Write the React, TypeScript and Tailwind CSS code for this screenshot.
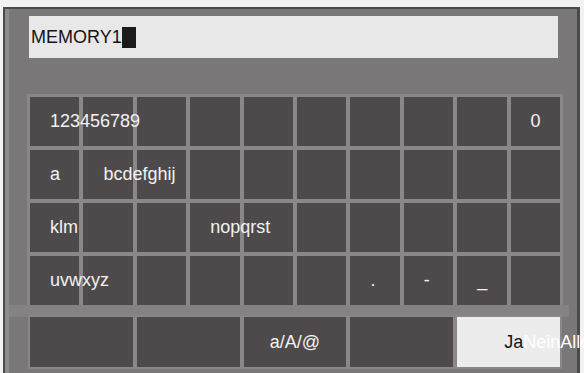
import React from "react";

const rows: { col: number; label: string }[][] = [
  [{ col: 0, label: "123456789" }, { col: 9, label: "0" }],
  [{ col: 0, label: "a" }, { col: 1, label: "bcdefghij" }],
  [{ col: 0, label: "klm" }, { col: 3, label: "nopqrst" }],
  [{ col: 0, label: "uvwxyz" }, { col: 6, label: "." }, { col: 7, label: "-" }, { col: 8, label: "_" }],
];

export default function App() {
  return (
    <div
      className="w-[584px] h-[373px] overflow-hidden bg-[#f2f2f2] pt-[7px] pl-[3px]"
      style={{ fontFamily: '"Liberation Sans", Arial, sans-serif' }}
    >
      <div className="w-[577px] h-[380px] border-t-2 border-l-2 border-r-[3px] border-[#4b4a4a] bg-[#7a7778]">
        <div className="h-full border-l-4 border-[#8d8b8c] flex flex-col">
          <div className="ml-[20px] mt-[7px] w-[529px] h-[42px] bg-[#e8e8e8] flex items-center pl-[2px] text-[18px] text-[#151515]">
            <span>MEMORY1</span>
            <span className="w-[14px] h-[21px] bg-[#1b1b1b]" />
          </div>
          <div className="ml-[21px] mt-[39px] w-[530px] grid grid-cols-10 gap-[4px] bg-[#8a8788] outline outline-[3px] outline-[#8a8788]">
            {rows.map((r, ri) =>
              Array.from({ length: 10 }).map((_, ci) => {
                const k = r.find((x) => x.col === ci);
                return (
                  <div
                    key={`${ri}-${ci}`}
                    className="h-[49px] bg-[#4e4a4b] flex items-center pl-[20px] text-[18px] text-[#f2f2f2] whitespace-nowrap"
                  >
                    {k && <span className="relative z-10">{k.label}</span>}
                  </div>
                );
              })
            )}
          </div>
          <div className="h-[12px] bg-[#858283] mr-[8px]" />
          <div className="ml-[21px] w-[530px] grid grid-cols-10 gap-[4px] bg-[#8a8788] outline outline-[2px] outline-[#8a8788]">
            <div className="col-span-2 h-[50px] bg-[#4e4a4b]" />
            <div className="col-span-2 h-[50px] bg-[#4e4a4b]" />
            <div className="col-span-2 h-[50px] bg-[#4e4a4b] flex items-center justify-center text-[18px] text-[#f2f2f2]">
              a/A/@
            </div>
            <div className="col-span-2 h-[50px] bg-[#4e4a4b]" />
            <div className="col-span-2 h-[50px] bg-[#ececec] flex items-center pl-[47px] text-[18px] whitespace-nowrap">
              <span className="relative z-10 text-[#151515]">Ja</span>
              <span className="relative z-10 text-white">Nein</span>
              <span className="relative z-10 text-white">Alle</span>
            </div>
          </div>
        </div>
      </div>
    </div>
  );
}
